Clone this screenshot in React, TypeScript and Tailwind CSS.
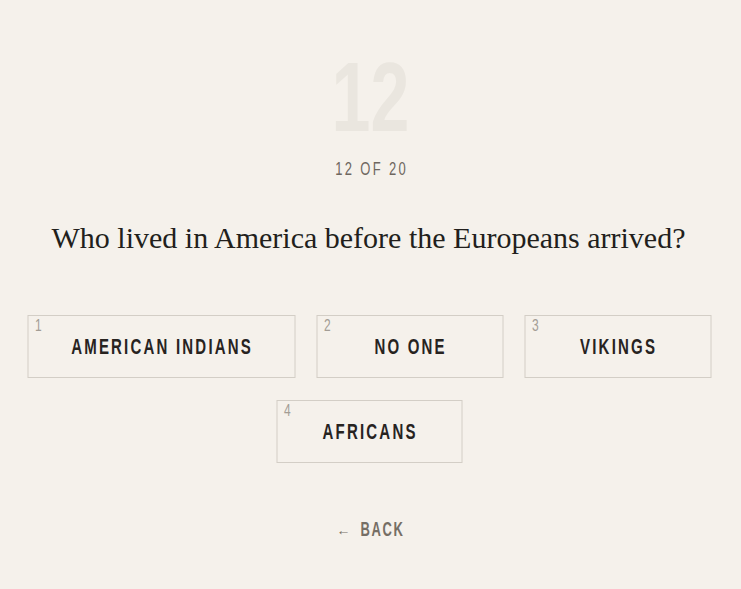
import React from "react";

const answers = [
  { n: 1, t: "AMERICAN INDIANS", w: "w-[268px]" },
  { n: 2, t: "NO ONE", w: "w-[187px]" },
  { n: 3, t: "VIKINGS", w: "w-[187px]" },
  { n: 4, t: "AFRICANS", w: "w-[186px]" },
];

export default function App() {
  return (
    <div className="min-h-[589px] w-full bg-[#f5f1eb] flex flex-col items-center font-['Liberation_Sans',Arial,sans-serif]">
      <div className="mt-[62px] h-[70px] text-[70px] leading-none font-bold text-[#eae6df] scale-y-[1.4]">
        12
      </div>
      <div className="mt-[30px] h-[13px] text-[13px] leading-none tracking-[2.3px] pl-[2.3px] text-[#6e675f] scale-y-[1.4]">
        12 OF 20
      </div>
      <h1 className="mt-[48px] h-[30px] text-[30px] leading-none text-[#221f1c] font-normal font-['Liberation_Serif',serif] -translate-x-[2px]">
        Who lived in America before the Europeans arrived?
      </h1>
      <div className="mt-[62px] w-[688px] flex flex-wrap justify-center gap-x-[21px] gap-y-[22px] -translate-x-[1.5px]">
        {answers.map((a) => (
          <div
            key={a.n}
            className={`relative ${a.w} h-[63px] border border-[#d3cec6] flex items-center justify-center`}
          >
            <span className="absolute left-[7px] top-[4px] text-[12px] leading-none text-[#a39d95] scale-y-[1.3]">
              {a.n}
            </span>
            <span className="text-[15px] leading-none tracking-[2.2px] pl-[2.2px] text-[#27231f] font-bold scale-y-[1.5] -translate-y-[1px] whitespace-nowrap">
              {a.t}
            </span>
          </div>
        ))}
      </div>
      <div className="mt-[59px] h-[13px] flex items-end gap-[10px] text-[#756e65]">
        <span className="text-[14px] leading-none translate-y-[2px]">←</span>
        <span className="text-[13px] leading-none tracking-[1.6px] font-bold scale-y-[1.6]">BACK</span>
      </div>
    </div>
  );
}
